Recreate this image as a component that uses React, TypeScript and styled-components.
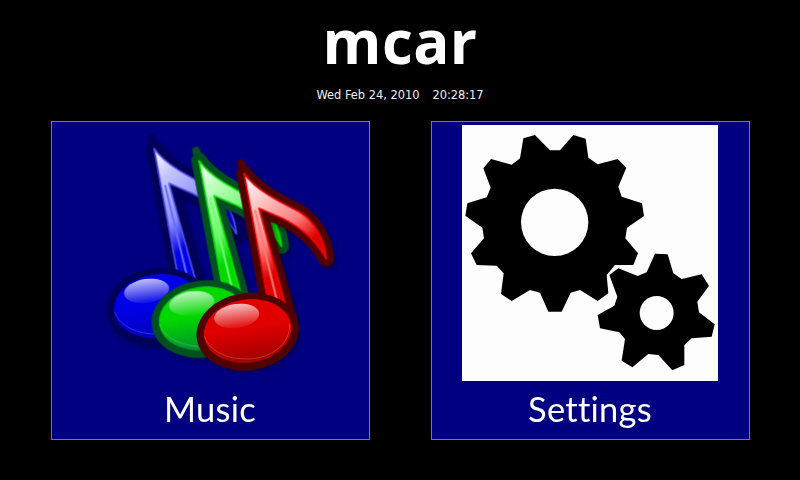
import styled, { createGlobalStyle } from 'styled-components'

const GlobalStyle = createGlobalStyle`
  html, body {
    margin: 0;
    padding: 0;
    background: #000;
  }
`

const Screen = styled.div`
  width: 800px;
  height: 480px;
  background: #000;
  color: #fff;
  overflow: hidden;
  display: flex;
  flex-direction: column;
  align-items: center;
`

const Title = styled.h1`
  margin: 0;
  height: 86px;
  font-family: 'Open Sans', sans-serif;
  font-size: 60px;
  font-weight: 700;
  letter-spacing: 0.4px;
  line-height: 82px;
`

const Clock = styled.div`
  height: 35px;
  display: flex;
  gap: 13px;
  font-family: 'DejaVu Sans', sans-serif;
  font-size: 11.4px;
  line-height: 18px;
  color: #f0f0f0;
`

const Tiles = styled.div`
  width: 100%;
  box-sizing: border-box;
  padding-left: 51px;
  display: flex;
  gap: 61px;
`

const Tile = styled.button`
  width: 319px;
  height: 319px;
  box-sizing: border-box;
  margin: 0;
  padding: 3px 1px 0 0;
  background: #000080;
  border: 1px solid #2a8cf0;
  color: #fff;
  display: flex;
  flex-direction: column;
  align-items: center;
`

const Label = styled.span`
  margin-top: 6px;
  font-family: 'Lato', sans-serif;
  font-size: 34.5px;
  letter-spacing: 0.25px;
  line-height: 44px;
`

const Picture = styled.svg`
  display: block;
  width: 256px;
  height: 256px;
  flex: none;
`

type NoteProps = {
  id: string
  dx: number
  dy: number
  edge: string
  rim: string
  pale: string
  mid: string
  full: string
  stripe: string
  headDark: string
}

const NOTE_BODY =
  'M615 190 C650 240 720 275 780 305 C830 335 858 395 862 447 C835 400 800 360 730 325 L660 295 L750 625 L690 590 Z'

const Note = ({ id, dx, dy, edge, rim, pale, mid, full, stripe, headDark }: NoteProps) => (
  <g transform={`translate(${dx} ${dy})`}>
    <defs>
      <linearGradient id={`${id}-flag`} gradientUnits="userSpaceOnUse" x1="620" y1="190" x2="820" y2="420">
        <stop offset="0" stopColor="#fff" />
        <stop offset="0.25" stopColor={pale} />
        <stop offset="0.65" stopColor={mid} />
        <stop offset="0.92" stopColor={full} />
      </linearGradient>
      <linearGradient id={`${id}-head`} x1="0" y1="0" x2="0" y2="1">
        <stop offset="0.45" stopColor={full} />
        <stop offset="1" stopColor={headDark} />
      </linearGradient>
      <linearGradient id={`${id}-shine`} x1="0" y1="0" x2="0" y2="1">
        <stop offset="0" stopColor="#fff" stopOpacity="0.75" />
        <stop offset="1" stopColor="#fff" stopOpacity="0.05" />
      </linearGradient>
    </defs>
    <g filter="url(#note-shadow)" opacity="0.35" transform="translate(8 8)">
      <path d={NOTE_BODY} fill="#000" stroke="#000" strokeWidth="46" strokeLinejoin="round" />
      <ellipse cx="625" cy="665" rx="153" ry="115" fill="#000" transform="rotate(-8 625 665)" />
    </g>
    <path d={NOTE_BODY} fill={edge} stroke={edge} strokeWidth="46" strokeLinejoin="round" />
    <path d="M606 160 L626 215" stroke={edge} strokeWidth="24" strokeLinecap="round" />
    <path d={NOTE_BODY} fill={`url(#${id}-flag)`} stroke={rim} strokeWidth="5" strokeLinejoin="round" />
    <path d="M648 300 L718 590" stroke={stripe} strokeWidth="6" fill="none" />
    <ellipse cx="626" cy="665" rx="154" ry="116" fill={edge} transform="rotate(-8 626 665)" />
    <ellipse cx="626" cy="663" rx="132" ry="95" fill={`url(#${id}-head)`} transform="rotate(-8 626 663)" />
    <path
      d="M497 680 C510 725 575 755 650 745 C710 735 755 695 752 640"
      fill="none"
      stroke="#fff"
      strokeOpacity="0.4"
      strokeWidth="1.5"
    />
    <ellipse cx="593" cy="618" rx="68" ry="36" fill={`url(#${id}-shine)`} transform="rotate(-8 593 618)" />
  </g>
)

const NotesIcon = () => (
  <Picture viewBox="129 45 768 768">
    <defs>
      <filter id="note-shadow" x="-20%" y="-20%" width="140%" height="140%">
        <feGaussianBlur stdDeviation="6" />
      </filter>
    </defs>
    <Note id="blue" dx={-270} dy={-75} edge="#00005a" rim="#5050e8" pale="#c8c8ff" mid="#9090ff" full="#0000e8" stripe="#6a6aff" headDark="#0000c0" />
    <Note id="green" dx={-135} dy={-38} edge="#005020" rim="#00e800" pale="#c4ffc4" mid="#70f870" full="#00d800" stripe="#70ff70" headDark="#008f30" />
    <Note id="red" dx={0} dy={0} edge="#500000" rim="#f00000" pale="#ffd0d0" mid="#ff8080" full="#e00000" stripe="#ff7a7a" headDark="#a00000" />
  </Picture>
)

const BIG_GEAR =
  'M375 106 L405 106 L445 60 L482 71 L490 128 L518 148 L578 132 L604 158 L580 215 L590 245 L651 265 L657 303 L606 338 L601 370 L639 415 L625 450 L570 450 L545 480 L550 535 L518 558 L465 525 L437 533 L410 590 L370 590 L345 533 L315 525 L260 558 L228 537 L236 475 L215 452 L155 450 L138 415 L177 370 L172 338 L121 302 L127 265 L185 247 L197 218 L175 160 L198 132 L260 149 L285 130 L295 70 L330 60 Z'

const SMALL_GEAR =
  'M690 416 L728 418 L745 475 L770 492 L830 478 L852 512 L817 560 L822 592 L869 628 L860 665 L800 670 L778 690 L778 750 L742 766 L700 720 L670 717 L622 757 L590 737 L600 672 L583 652 L525 640 L518 600 L568 572 L577 545 L553 480 L580 460 L638 483 L665 472 Z'

const GearsIcon = () => (
  <Picture viewBox="111 30 768 768">
    <rect x="111" y="30" width="768" height="768" fill="#fdfdfd" />
    <path d={BIG_GEAR} fill="#000" />
    <circle cx="389" cy="322" r="101" fill="#fdfdfd" />
    <path d={SMALL_GEAR} fill="#000" />
    <circle cx="695" cy="594" r="51" fill="#fdfdfd" />
  </Picture>
)

export default function App() {
  return (
    <Screen>
      <GlobalStyle />
      <Title>mcar</Title>
      <Clock>
        <span>Wed Feb 24, 2010</span>
        <span>20:28:17</span>
      </Clock>
      <Tiles>
        <Tile>
          <NotesIcon />
          <Label>Music</Label>
        </Tile>
        <Tile>
          <GearsIcon />
          <Label>Settings</Label>
        </Tile>
      </Tiles>
    </Screen>
  )
}
